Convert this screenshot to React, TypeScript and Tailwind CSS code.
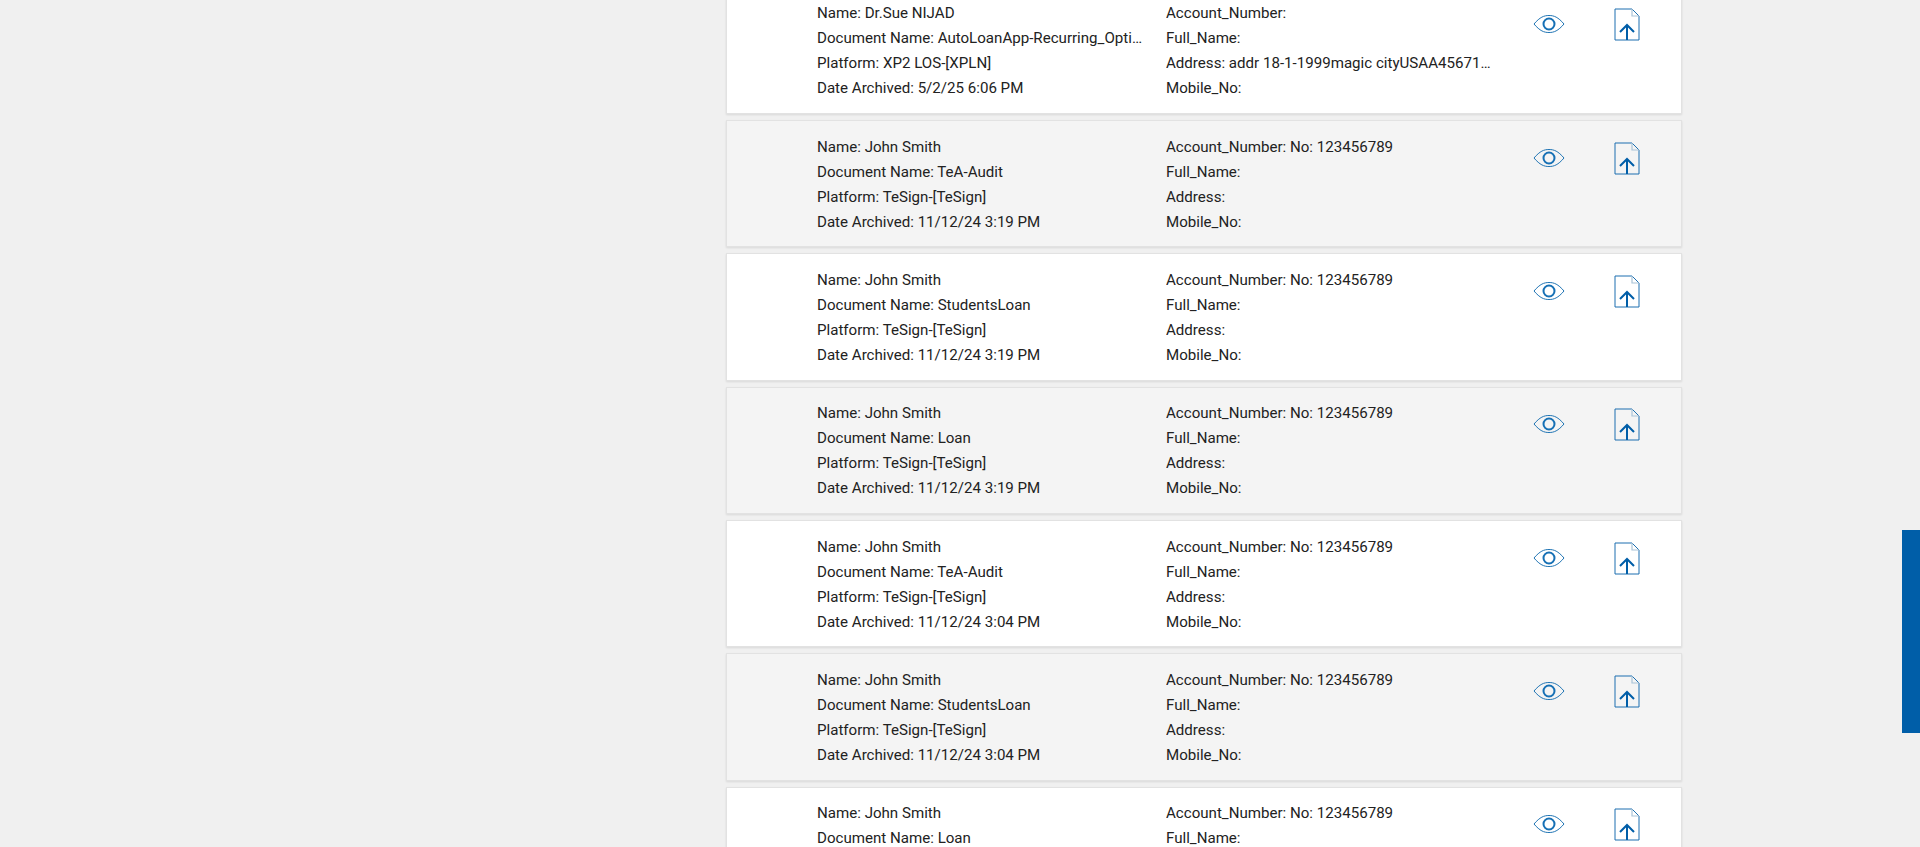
import React from "react";

const BLUE = "#005ea8";

function Eye() {
  return (
    <svg width="32" height="20" viewBox="0 0 32 20" fill="none" className="block">
      <path d="M1 10 C7 3 11 1.5 16 1.5 C21 1.5 25 3 31 10 C25 17 21 18.5 16 18.5 C11 18.5 7 17 1 10 Z" stroke="#1f74b4" strokeWidth="1" />
      <circle cx="16" cy="10" r="5.5" stroke="#1670b5" strokeWidth="2" />
    </svg>
  );
}

function FileUp() {
  return (
    <svg width="26" height="33" viewBox="0 0 26 33" fill="none" className="block">
      <path d="M1 1 H18 L25 8 V32 H1 Z" stroke="#1c6fb0" strokeWidth="1" />
      <path d="M18 1 V8 H25" stroke="#a9c4d8" strokeWidth="1.2" />
      <path d="M13 32 V17" stroke={BLUE} strokeWidth="2" />
      <path d="M6 24 L13 17 L20 24" stroke={BLUE} strokeWidth="2" />
    </svg>
  );
}

type Row = { name: string; doc: string; platform: string; date: string; account: string; address: string };

const rows: Row[] = [
  { name: "Dr.Sue NIJAD", doc: "AutoLoanApp-Recurring_Optional_Disclosures", platform: "XP2 LOS-[XPLN]", date: "5/2/25 6:06 PM", account: "", address: "addr 18-1-1999magic cityUSAA45671234567890" },
  { name: "John Smith", doc: "TeA-Audit", platform: "TeSign-[TeSign]", date: "11/12/24 3:19 PM", account: "No: 123456789", address: "" },
  { name: "John Smith", doc: "StudentsLoan", platform: "TeSign-[TeSign]", date: "11/12/24 3:19 PM", account: "No: 123456789", address: "" },
  { name: "John Smith", doc: "Loan", platform: "TeSign-[TeSign]", date: "11/12/24 3:19 PM", account: "No: 123456789", address: "" },
  { name: "John Smith", doc: "TeA-Audit", platform: "TeSign-[TeSign]", date: "11/12/24 3:04 PM", account: "No: 123456789", address: "" },
  { name: "John Smith", doc: "StudentsLoan", platform: "TeSign-[TeSign]", date: "11/12/24 3:04 PM", account: "No: 123456789", address: "" },
  { name: "John Smith", doc: "Loan", platform: "TeSign-[TeSign]", date: "11/12/24 3:04 PM", account: "No: 123456789", address: "" },
];

function Line({ children }: { children: React.ReactNode }) {
  return <div className="h-[25px] leading-[25px] truncate">{children}</div>;
}

function Card({ row, odd }: { row: Row; odd: boolean }) {
  return (
    <div className={`flex h-[127.33px] shrink-0 border border-[#e2e2e2] shadow-[0_1px_2px_rgba(0,0,0,0.1)] pt-[13.6px] ${odd ? "bg-[#f4f4f4]" : "bg-white"}`}>
      <div className="w-[327px] ml-[90px]">
        <Line>Name: {row.name}</Line>
        <Line>Document Name: {row.doc}</Line>
        <Line>Platform: {row.platform}</Line>
        <Line>Date Archived: {row.date}</Line>
      </div>
      <div className="w-[327px] ml-[22px]">
        <Line>Account_Number: {row.account}</Line>
        <Line>Full_Name:</Line>
        <Line>Address: {row.address}</Line>
        <Line>Mobile_No:</Line>
      </div>
      <div className="ml-[40px] mt-[13px] w-[32px]"><Eye /></div>
      <div className="ml-[49px] mt-[7px] w-[26px]"><FileUp /></div>
    </div>
  );
}

export default function App() {
  return (
    <div className="relative h-[847px] w-[1920px] overflow-hidden bg-[#f0f0f0] text-[#222222] text-[15.1px] font-['Roboto',sans-serif]">
      <div className="ml-[726px] w-[956px] -mt-[13.33px] flex flex-col gap-[6px]">
        {rows.map((r, i) => (
          <Card key={i} row={r} odd={i % 2 === 1} />
        ))}
      </div>
      <div className="absolute right-0 top-[530px] w-[18px] h-[203px] bg-[#005ea8]" />
    </div>
  );
}
